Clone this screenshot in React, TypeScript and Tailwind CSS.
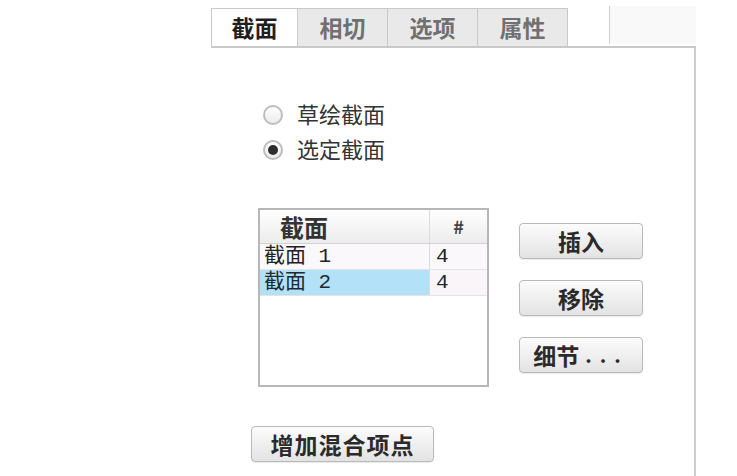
import React from "react";

const cjk = "font-['Noto_Sans_CJK_SC','Noto_Sans',sans-serif]";
const mono = "font-['Liberation_Mono','Noto_Sans_CJK_SC',monospace]";

const TABS = ["截面", "相切", "选项", "属性"];

function Tab({ label, active }: { label: string; active?: boolean }) {
  return (
    <div
      className={`h-full flex items-center justify-center border-t border-r border-[#c9c9c9] text-[23px] font-bold leading-none ${
        active ? "w-[87px] bg-white text-[#1f1f1f] border-l" : "w-[90px] bg-[#e9e9e9] text-[#707070]"
      }`}
    >
      {label}
    </div>
  );
}

function Radio({ label, checked }: { label: string; checked?: boolean }) {
  return (
    <div className="h-[35px] flex items-center gap-[14px]">
      <span className="w-[20px] h-[20px] rounded-full border-2 border-[#bdbdbd] bg-gradient-to-b from-white to-[#ececec] flex items-center justify-center">
        {checked && <span className="w-[10px] h-[10px] rounded-full bg-[#2e2e2e]" />}
      </span>
      <span className="text-[22px] leading-none text-[#333] -mt-[3px]">{label}</span>
    </div>
  );
}

function Btn({ children, w }: { children: React.ReactNode; w: string }) {
  return (
    <button
      className={`${w} h-[36px] rounded-[4px] border border-[#b9b9b9] bg-gradient-to-b from-[#fcfcfc] to-[#e3e3e3] shadow-[0_1px_1px_rgba(0,0,0,0.08)] text-[23px] font-bold leading-none text-[#2a2a2a] flex items-center justify-center`}
    >
      {children}
    </button>
  );
}

export default function App() {
  return (
    <div className={`w-[737px] h-[476px] bg-white overflow-hidden ${cjk}`}>
      <div className="pl-[211px] pt-[8px] w-[696px] flex flex-col">
        {/* tab strip */}
        <div className="h-[40px] flex border-b-2 border-[#c9c9c9]">
          {TABS.map((t, i) => (
            <Tab key={t} label={t} active={i === 0} />
          ))}
          <div className="w-[41px] h-full" />
          <div className="flex-1 h-full -mt-[2px] border-l border-[#cfcfcf] bg-[#f9f9f9]" />
        </div>

        {/* panel body */}
        <div className="h-[428px] border-r-2 border-[#cdcdcd] flex flex-col">
          <div className="ml-[52px] mt-[49px] flex flex-col">
            <Radio label="草绘截面" />
            <Radio label="选定截面" checked />
          </div>

          <div className="flex mt-[41px]">
            <div className="ml-[47px] w-[231px] h-[179px] border-2 border-[#b7b7b7] bg-white flex flex-col">
              <div className="h-[34px] flex bg-gradient-to-b from-white to-[#ececec] border-b border-[#d2d2d2]">
                <div className="w-[169px] pl-[20px] flex items-center text-[24px] font-bold text-[#333] leading-none">
                  截面
                </div>
                <div className="flex-1 border-l border-[#dcdcdc] flex items-center justify-center text-[18px] font-bold text-[#444]">
                  #
                </div>
              </div>
              <div className={`h-[26px] flex ${mono} text-[21px] leading-none text-[#222] border-b border-[#e4e4e4]`}>
                <div className="w-[169px] pl-[4px] flex items-center bg-[#fbf8fb]">截面 1</div>
                <div className="flex-1 pl-[6px] flex items-center border-l border-[#dcdcdc] bg-[#fbf8fb]">4</div>
              </div>
              <div className={`h-[26px] flex ${mono} text-[21px] leading-none text-[#1e2a33] border-b border-[#e4e4e4]`}>
                <div className="w-[169px] pl-[4px] flex items-center bg-[#b3e2f8]">截面 2</div>
                <div className="flex-1 pl-[6px] flex items-center border-l border-[#dcdcdc] bg-[#f9f5f9]">4</div>
              </div>
            </div>

            <div className="ml-[30px] pt-[15px] flex flex-col gap-[21px]">
              <Btn w="w-[124px]">插入</Btn>
              <Btn w="w-[124px]">移除</Btn>
              <Btn w="w-[124px]">
                细节<span className="tracking-[8px] pl-[6px] text-[20px]">...</span>
              </Btn>
            </div>
          </div>

          <div className="ml-[40px] mt-[39px]">
            <Btn w="w-[183px]">
              <span className="tracking-[1px]">增加混合项点</span>
            </Btn>
          </div>
        </div>
      </div>
    </div>
  );
}
